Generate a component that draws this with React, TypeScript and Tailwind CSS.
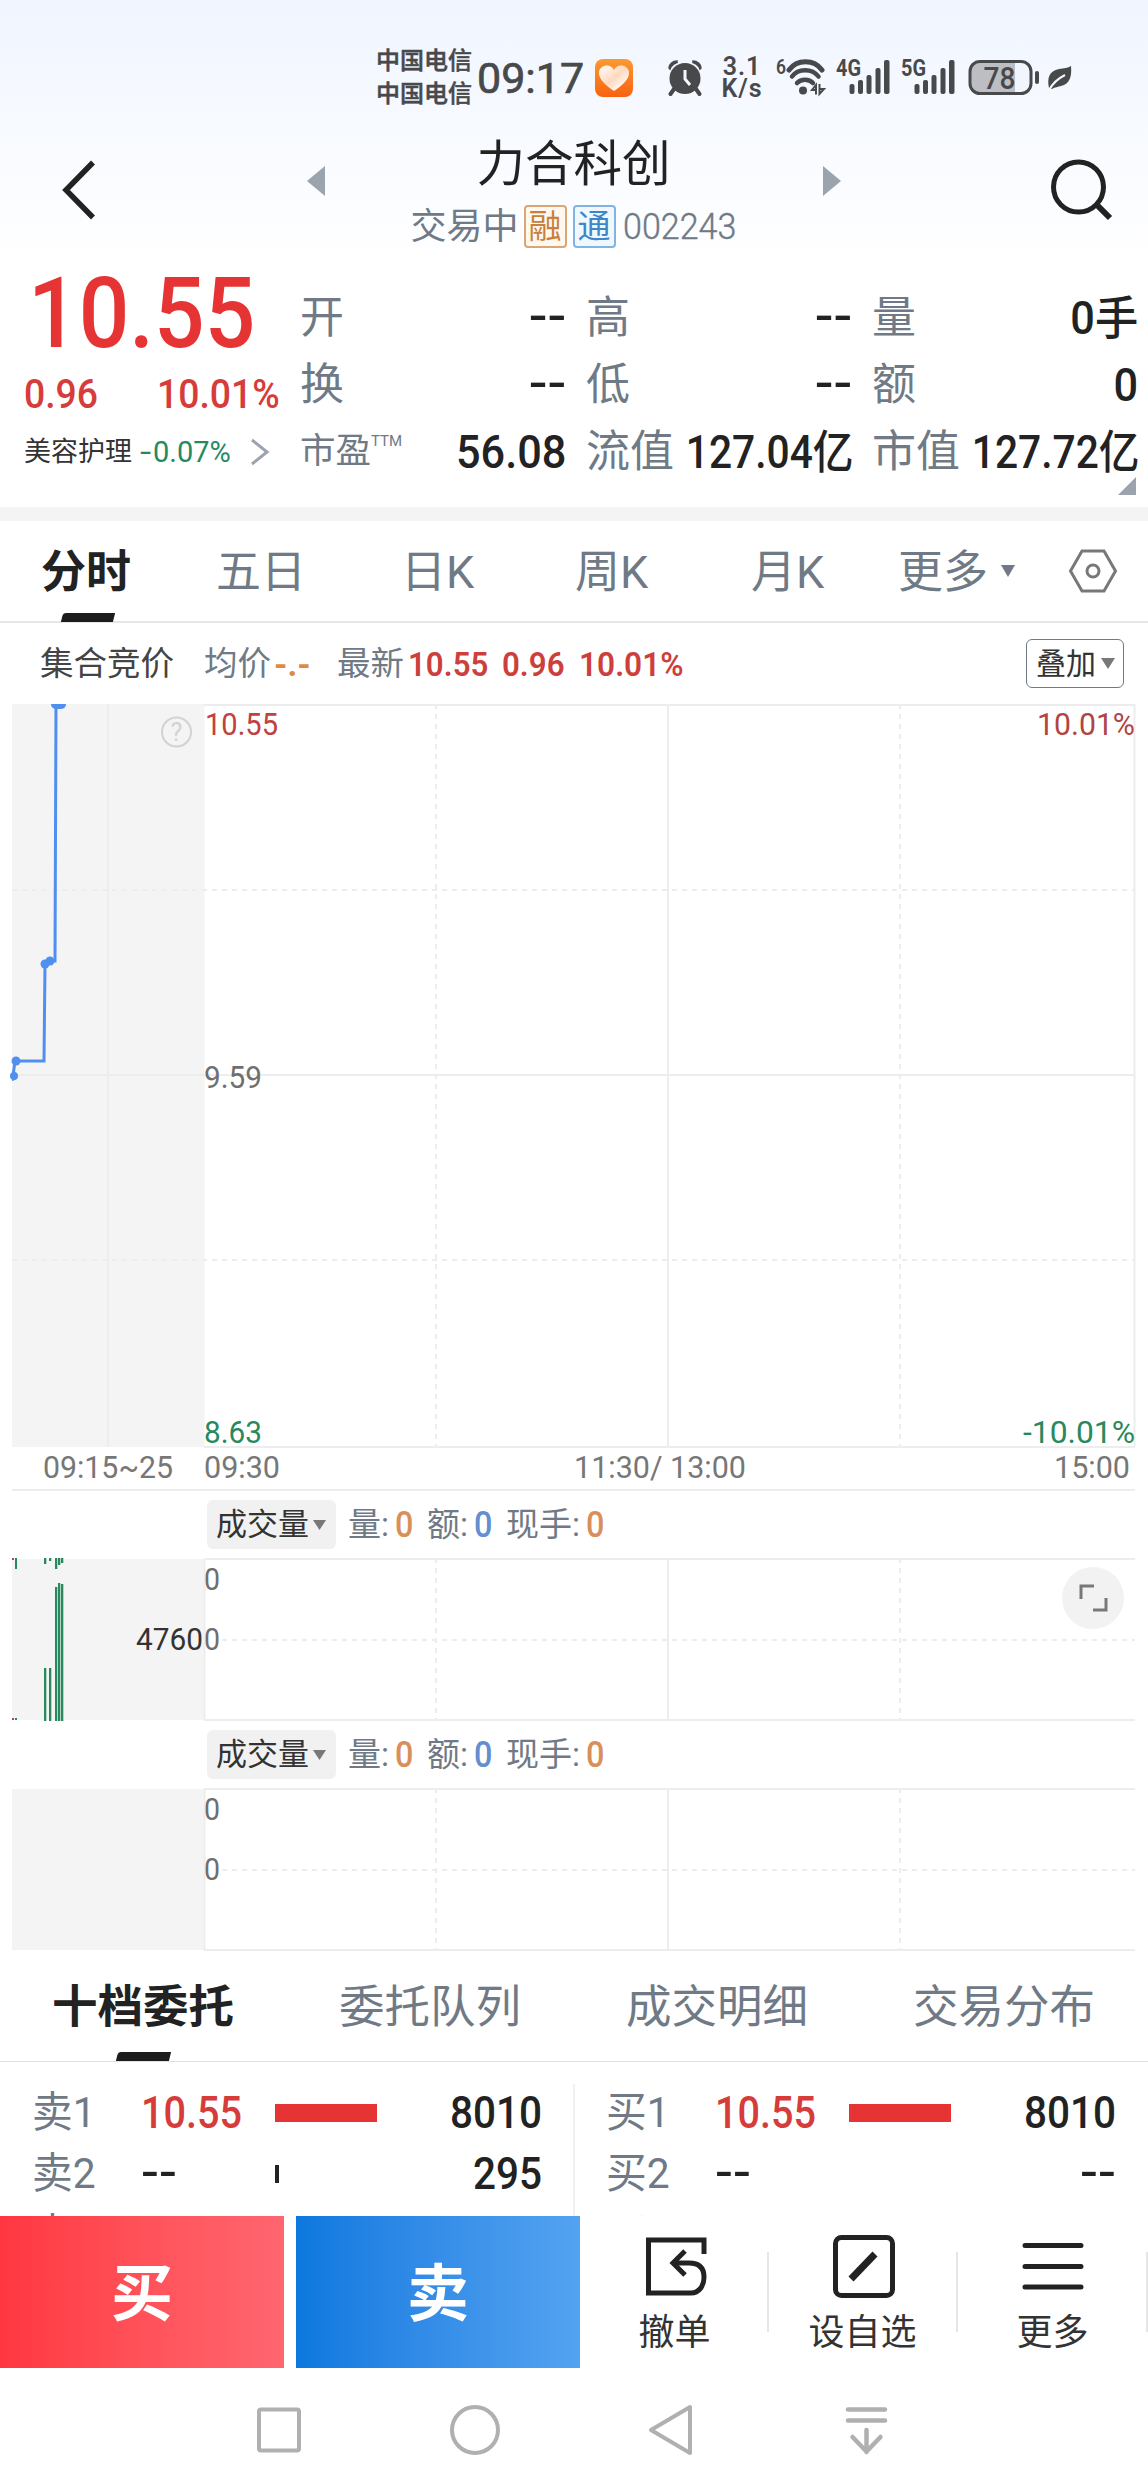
import React from "react";
import clsx from "clsx";

const kTabs = [
  { label: "五日", className: "w-[185px]" },
  { label: "日K", className: "w-[174px]" },
  { label: "周K", className: "w-[176px]" },
  { label: "月K", className: "w-[147px]" },
];

const bookTabs = ["十档委托", "委托队列", "成交明细", "交易分布"];

const sellOrders = [
  { label: "卖1", price: "10.55", volume: "8010", bar: 102, up: true },
  { label: "卖2", price: "--", volume: "295", bar: 4, up: false },
  { label: "卖3", price: "--", volume: "--", bar: 0, up: false },
];

const buyOrders = [
  { label: "买1", price: "10.55", volume: "8010", bar: 102, up: true },
  { label: "买2", price: "--", volume: "--", bar: 0, up: false },
  { label: "买3", price: "--", volume: "--", bar: 0, up: false },
];

const bars = [
  { x: 32, h: 6, y: 110 },
  { x: 37, h: 3, y: 110 },
  { x: 43, h: 11, y: 29 },
  { x: 46, h: 7, y: 25 },
  { x: 49, h: 5, y: 26 },
];

const Signal = ({ label }: { label: string }) => (
  <svg className="h-10 w-[54px] shrink-0 overflow-visible" viewBox="0 0 54 40" fill="#48494b">
    <text x="0" y="18.5" fontSize="23" fontWeight="700" textLength="25" lengthAdjust="spacingAndGlyphs">
      {label}
    </text>
    <rect x="13.5" y="27" width="5" height="10" rx="2" />
    <rect x="22" y="23" width="5" height="14" rx="2" />
    <rect x="30.5" y="18" width="5" height="19" rx="2" />
    <rect x="39.5" y="11" width="5" height="26" rx="2" />
    <rect x="48" y="3" width="5.5" height="34" rx="2" />
  </svg>
);

const StatusBar = () => (
  <div className="flex h-[130px] items-start pl-[376px] pt-[45px] text-[#48494b]">
    <div className="w-[101px] whitespace-nowrap text-[24px] font-medium leading-[33px] [-webkit-text-stroke:0.5px_#48494b]">
      <div>中国电信</div>
      <div>中国电信</div>
    </div>
    <div className="mt-[12px] w-[118px] text-[43px] leading-[43px] [-webkit-text-stroke:0.7px_#48494b]">09:17</div>
    <svg className="mt-[14px] h-[38px] w-[38px]" viewBox="0 0 38 38">
      <defs>
        <linearGradient id="heartBg" x1="0" y1="0" x2="0" y2="1">
          <stop offset="0" stopColor="#fb9a32" />
          <stop offset="1" stopColor="#f8620f" />
        </linearGradient>
        <linearGradient id="heartFg" x1="0" y1="0" x2="1" y2="1">
          <stop offset="0" stopColor="#ffffff" />
          <stop offset="0.5" stopColor="#ffd9be" />
          <stop offset="0.85" stopColor="#ffffff" />
        </linearGradient>
      </defs>
      <rect width="38" height="38" rx="8" fill="url(#heartBg)" />
      <path
        d="M19 32C10 26 4 20 4 14C4 9 8 6.500 12 6.500C15 6.500 17.500 8 19 11C20.500 8 23 6.500 26 6.500C30 6.500 34 9 34 14C34 20 28 26 19 32Z"
        fill="url(#heartFg)"
      />
    </svg>
    <svg className="ml-[34px] mt-[13px] h-[38px] w-[38px]" viewBox="0 0 38 38" fill="#48494b">
      <circle cx="18" cy="20.500" r="15.500" />
      <path d="M2 10C2 6 6 3 10 3L10 4.500C6 6 4 8 3 11ZM34 10C34 6 30 3 26 3L26 4.500C30 6 32 8 33 11Z" stroke="#48494b" strokeWidth="1.500" />
      <path d="M7 31L3.500 36M29 31L32.500 36" stroke="#48494b" strokeWidth="4" strokeLinecap="round" />
      <path d="M18 12V21L23 27" stroke="#f4f7fd" strokeWidth="3" fill="none" />
    </svg>
    <div className="ml-[12px] mt-[11px] w-[50px] text-center text-[25px] font-semibold leading-[22px]">
      <div className="tracking-[1px]">3.1</div>
      <div className="tracking-[1px]">K/s</div>
    </div>
    <svg className="ml-[8px] mt-[12px] h-10 w-[52px] overflow-visible" viewBox="0 0 52 40" fill="none" stroke="#48494b">
      <text x="1" y="17" fontSize="20" fontWeight="600" fill="#48494b" stroke="none" textLength="10" lengthAdjust="spacingAndGlyphs">
        6
      </text>
      <path d="M14 13C22 2 39 2 47 13" strokeWidth="5" strokeLinecap="round" />
      <path d="M17 19.500C23 11 37 11 43.500 19.500" strokeWidth="4.500" strokeLinecap="round" />
      <path d="M22 26C26 21.500 34 21.500 38 26" strokeWidth="4.500" strokeLinecap="round" />
      <circle cx="28" cy="33.500" r="4" fill="#48494b" stroke="none" />
      <path d="M41 37.500V28L37 33H41M44.500 27V37L49 32H44.500" strokeWidth="2" />
    </svg>
    <div className="ml-[9px] mt-[12px] flex w-[132px] gap-[11px]">
      <Signal label="4G" />
      <Signal label="5G" />
    </div>
    <svg className="mt-[13px] h-10 w-[106px]" viewBox="0 0 106 40">
      <rect x="2" y="3.500" width="61" height="32" rx="10" fill="#f1f5fd" />
      <path d="M12 3.500H47V35.500H12Q2 35.500 2 25.500V13.500Q2 3.500 12 3.500Z" fill="#bcbec3" />
      <rect x="2" y="3.500" width="61" height="32" rx="10" fill="none" stroke="#48494b" strokeWidth="3" />
      <rect x="67" y="13" width="4" height="13" rx="2" fill="#48494b" />
      <text x="15.500" y="30.500" fontSize="32" fontWeight="500" fill="#48494b" textLength="32" lengthAdjust="spacingAndGlyphs">
        78
      </text>
      <path d="M103 8C104 18 102 26 93 28C90 29 87 29 84 31L81 30C79 20 81 13 91 11C96 10 100 10 103 8Z" fill="#48494b" />
      <path d="M81 32C85 25 91 20 97 17" stroke="#f4f7fd" strokeWidth="2" fill="none" />
    </svg>
  </div>
);

const Header = () => (
  <div className="flex h-[132px] pt-[8px]">
    <svg className="ml-[60px] mt-[20px] h-[64px] w-[40px]" viewBox="0 0 40 64" fill="none" stroke="#222222" strokeWidth="5.500">
      <path d="M33 4.500L6 32L33 59.500" />
    </svg>
    <svg className="ml-[207px] mt-[28px] h-[30px] w-[18px]" viewBox="0 0 18 30" fill="#9ba3ad">
      <path d="M18 0V30L0 15Z" />
    </svg>
    <div className="flex w-[497px] flex-col items-center">
      <div className="pt-[1px] text-[48.500px] leading-[52px] text-[#222222]">力合科创</div>
      <div className="mt-[14px] flex h-[43px] items-center text-[#6f7a86]">
        <div className="w-[113px] pt-[1px] text-[36px] leading-[43px]">交易中</div>
        <div className="h-[43px] w-[43px] rounded-[4px] border-2 border-[#d9a774] bg-[#fff8ef] text-center text-[33px] leading-[39px] text-[#c9803a]">
          融
        </div>
        <div className="ml-[6px] h-[43px] w-[43px] rounded-[4px] border-2 border-[#82b4e2] bg-[#f0f8ff] text-center text-[33px] leading-[39px] text-[#3f86c8]">
          通
        </div>
        <div className="ml-[7px] w-[114px]">
          <span className="inline-block origin-left scale-x-[0.92] text-[37px] font-light leading-[43px] [-webkit-text-stroke:0.4px_#6f7a86]">
            002243
          </span>
        </div>
      </div>
    </div>
    <svg className="ml-[1px] mt-[28px] h-[30px] w-[18px]" viewBox="0 0 18 30" fill="#9ba3ad">
      <path d="M0 0V30L18 15Z" />
    </svg>
    <svg className="ml-[207px] mt-[20px] h-[64px] w-[66px]" viewBox="0 0 66 64" fill="none" stroke="#222222" strokeWidth="5">
      <circle cx="30.500" cy="29" r="25" />
      <path d="M49 47L62 60" strokeWidth="6" />
    </svg>
  </div>
);

type StatProps = { label: React.ReactNode; value: string; valueClass?: string };

const Stat = ({ label, value, valueClass = "scale-x-[0.94]" }: StatProps) => (
  <div className="flex items-center justify-between whitespace-nowrap">
    <span className="text-[44px] text-[#6f7a86]">{label}</span>
    <span className={clsx("inline-block origin-right text-[46px] font-medium text-[#222222]", valueClass)}>{value}</span>
  </div>
);

const dash = "-translate-y-[2px] scale-x-[1.2]";
const amount = "-ml-[20px] translate-x-[2px] scale-x-[0.885]";

const Quote = () => (
  <div className="relative flex h-[245px] leading-none">
    <div className="w-[300px] shrink-0 pt-[2px]">
      <div className="ml-[28px] origin-left scale-x-[0.9] text-[99px] font-medium text-[#e63333]">10.55</div>
      <div className="ml-[24px] mt-[6px] flex text-[41px] font-medium leading-[50px] text-[#d63c3a]">
        <span className="w-[133px] origin-left scale-x-[0.91]">0.96</span>
        <span className="origin-left scale-x-[0.91]">10.01%</span>
      </div>
      <div className="ml-[24px] mt-[13px] flex items-center leading-[40px]">
        <span className="w-[116px] text-[27px] text-[#333333]">美容护理</span>
        <span className="w-[110px] text-[29px] text-[#27895d]">
          <span className="inline-block origin-left scale-x-[1.4]">-</span>
          <span className="ml-[5px] inline-block">0.07%</span>
        </span>
        <svg className="h-[28px] w-[20px]" viewBox="0 0 20 28" fill="none" stroke="#9ba3ad" strokeWidth="3">
          <path d="M2 2L17 14L2 26" />
        </svg>
      </div>
    </div>
    <div className="grid h-[201px] grid-cols-[266px_266px_266px] grid-rows-[67px_67px_67px] gap-x-[20px] pt-[22px]">
      <Stat label="开" value="--" valueClass={dash} />
      <Stat label="高" value="--" valueClass={dash} />
      <Stat label="量" value="0手" />
      <Stat label="换" value="--" valueClass={dash} />
      <Stat label="低" value="--" valueClass={dash} />
      <Stat label="额" value="0" />
      <Stat
        label={
          <span className="flex text-[35.500px]">
            市盈<span className="text-[15px]">TTM</span>
          </span>
        }
        value="56.08"
      />
      <Stat label="流值" value="127.04亿" valueClass={amount} />
      <Stat label="市值" value="127.72亿" valueClass={amount} />
    </div>
    <svg className="absolute bottom-[12px] right-[12px] h-[18px] w-[18px]" viewBox="0 0 18 18" fill="#9ba3ad">
      <path d="M18 0V18H0Z" />
    </svg>
  </div>
);

const KTabs = () => (
  <div className="relative flex h-[102px] items-center border-b-2 border-[#e6e6e6] pl-[41px] pt-[3px] text-[45px] leading-none text-[#6f7a86]">
    <div className="w-[175px] font-bold text-[#222222]">分时</div>
    {kTabs.map((tab) => (
      <div key={tab.label} className={tab.className}>
        {tab.label}
      </div>
    ))}
    <div className="w-[103px]">更多</div>
    <svg className="mb-[3px] h-[12px] w-[14px]" viewBox="0 0 14 12" fill="#6f7a86">
      <path d="M0 0H14L7 12Z" />
    </svg>
    <svg className="mb-[3px] ml-[53px] h-[44px] w-[50px]" viewBox="0 0 50 44" fill="none" stroke="#7a7777" strokeWidth="3">
      <path d="M14 2H36L47.500 22L36 42H14L2.500 22Z" />
      <circle cx="25" cy="22" r="6" />
    </svg>
    <div className="absolute -bottom-[1px] left-[62px] h-[9px] w-[52px] -skew-x-[14deg] rounded-tl-[3px] bg-[#1c1c1c]"></div>
  </div>
);

const InfoRow = () => (
  <div className="flex h-[81px] items-center whitespace-nowrap pl-[40px] text-[33.500px] leading-none text-[#6f7a86]">
    <span className="w-[164px] text-[#444444]">集合竞价</span>
    <span className="w-[70px]">均价</span>
    <span className="w-[63px] text-[34px] font-bold text-[#e08a3e]">-.-</span>
    <span className="w-[71px]">最新</span>
    <span className="w-[94px] origin-left scale-x-[0.92] text-[34px] font-semibold text-[#cd3f3c]">10.55</span>
    <span className="w-[77px] origin-left scale-x-[0.92] text-[34px] font-semibold text-[#cd3f3c]">0.96</span>
    <span className="w-[447px] origin-left scale-x-[0.93] text-[34px] font-semibold text-[#cd3f3c]">10.01%</span>
    <div className="flex h-[49px] w-[98px] shrink-0 items-center rounded-[6px] border border-[#6f7a86] pl-[9px] text-[30px] text-[#333333]">
      叠加
      <svg className="ml-[5px] h-[11px] w-[14px]" viewBox="0 0 14 11" fill="#7a7777">
        <path d="M0 0H14L7 11Z" />
      </svg>
    </div>
  </div>
);

type LabelProps = { x: number; y: number; w: number; fill: string; children: string };

const Label = ({ x, y, w, fill, children }: LabelProps) => (
  <text x={x} y={y} fontSize="31" fill={fill} textLength={w} lengthAdjust="spacingAndGlyphs">
    {children}
  </text>
);

const PriceChart = () => (
  <svg className="ml-[12px] h-[786px] w-[1124px] overflow-visible" viewBox="0 0 1124 786">
    <rect y="0" width="192.500" height="743" fill="#f4f4f4" />
    <g stroke="#ededed" strokeWidth="2" fill="none">
      <path d="M96 0V743M656 0V743M1122.500 0V743" />
      <path d="M192 1H1123M0 371H1123M192 743H1123M0 786H1123" />
      <path d="M424 0V743M888 0V743M0 186H1123M0 556H1123" strokeDasharray="5 5" />
    </g>
    <g fill="#4f8fef">
      <path d="M1 372L3 357H32L33 260L38 257H43L44 0" fill="none" stroke="#4f8fef" strokeWidth="3" />
      <path d="M0 367a5 5 0 0 1 0 10Z" />
      <circle cx="2" cy="372" r="4" />
      <circle cx="4" cy="357" r="4.500" />
      <circle cx="33" cy="260" r="4.500" />
      <circle cx="38" cy="257" r="4.500" />
      <path d="M39 0H54Q54 5 48 5H45Q39 5 39 0Z" />
    </g>
    <circle cx="164.500" cy="28" r="14.500" fill="none" stroke="#d2d2d2" strokeWidth="2" />
    <text x="164.500" y="37" fontSize="25" fill="#d2d2d2" textAnchor="middle">
      ?
    </text>
    <Label x={193} y={31} w={73} fill="#c0413f">10.55</Label>
    <Label x={192} y={384} w={58} fill="#6f6f6f">9.59</Label>
    <Label x={192} y={739} w={58} fill="#27895d">8.63</Label>
    <Label x={1025} y={31} w={98} fill="#b04543">10.01%</Label>
    <Label x={1011} y={739} w={112} fill="#27895d">-10.01%</Label>
    <Label x={31} y={774} w={130} fill="#777777">09:15~25</Label>
    <Label x={192} y={774} w={76} fill="#777777">09:30</Label>
    <Label x={562} y={774} w={172} fill="#777777">11:30/ 13:00</Label>
    <Label x={1042} y={774} w={76} fill="#777777">15:00</Label>
  </svg>
);

const VolumePanel = ({ withBars }: { withBars?: boolean }) => (
  <div>
    <div className="flex h-[68px] items-center whitespace-nowrap pl-[207px] pt-[1px] text-[33px] leading-none text-[#6f7a86]">
      <div className="mr-[12px] flex h-[49px] w-[129px] items-center rounded-[6px] bg-[#f1f1f1] pl-[9px] text-[31px] text-[#333333]">
        成交量
        <svg className="ml-[4px] h-[10px] w-[13px]" viewBox="0 0 13 10" fill="#7a7777">
          <path d="M0 0H13L6.500 10Z" />
        </svg>
      </div>
      <span className="w-[47px]">量:</span>
      <span className="w-[32px] origin-left scale-x-[0.9] text-[36px] font-medium text-[#d98f59]">0</span>
      <span className="w-[47px]">额:</span>
      <span className="w-[32px] origin-left scale-x-[0.9] text-[36px] font-medium text-[#638ecf]">0</span>
      <span className="w-[80px]">现手:</span>
      <span className="origin-left scale-x-[0.9] text-[36px] font-medium text-[#d98f59]">0</span>
    </div>
    <div className="relative h-[162px]">
      <svg className="ml-[12px] h-[162px] w-[1124px] overflow-visible" viewBox="0 0 1124 162">
        <rect y="1" width="192" height="161" fill="#f4f4f4" />
        <g stroke="#ededed" strokeWidth="2" fill="none">
          <path d="M192.500 0V162M656 0V162M192 1H1123M192 162H1123" />
          <path d="M424 0V162M888 0V162M210 82H1123" strokeDasharray="5 5" />
        </g>
        {withBars && (
          <g fill="#27895d">
            {bars.map((bar) => (
              <g key={bar.x}>
                <rect x={bar.x} y="0" width="2.3" height={bar.h} />
                <rect x={bar.x} y={bar.y} width="2.3" height={163 - bar.y} />
              </g>
            ))}
            <rect x="3" y="0" width="2" height="11" />
            <rect x="3" y="160" width="2" height="2" />
            <rect x="0" y="0" width="2" height="2" fill="#c0413f" />
            <rect x="0" y="160" width="2" height="2" fill="#c0413f" />
            <Label x={124} y={92} w={67} fill="#333333">4760</Label>
          </g>
        )}
        <Label x={192} y={32} w={16} fill="#6f6f6f">0</Label>
        <Label x={192} y={92} w={16} fill="#6f6f6f">0</Label>
      </svg>
      {withBars && (
        <div className="absolute right-[24px] top-[9px] grid h-[62px] w-[62px] place-items-center rounded-full bg-[#f2f2f2]">
          <svg className="h-[30px] w-[30px]" viewBox="0 0 30 30" fill="none" stroke="#7a7777" strokeWidth="3">
            <path d="M3 16V3H16M28 15V27H15" />
          </svg>
        </div>
      )}
    </div>
  </div>
);

const BookTabs = () => (
  <div className="relative flex h-[112px] items-center border-b border-[#e0e0e0] pl-[52px] pt-[5px] text-[45.500px] leading-none text-[#6f7a86]">
    {bookTabs.map((tab, i) => (
      <div key={tab} className={clsx("w-[287px] shrink-0", i === 0 && "font-bold text-[#222222]")}>
        {tab}
      </div>
    ))}
    <div className="absolute bottom-0 left-[117px] h-[9px] w-[53px] -skew-x-[14deg] rounded-tl-[3px] bg-[#1c1c1c]"></div>
  </div>
);

const OrderColumn = ({ orders }: { orders: typeof sellOrders }) => (
  <div className="w-1/2 pl-[32px] pr-[32px]">
    {orders.map((order) => (
      <div key={order.label} className="flex h-[61px] items-center whitespace-nowrap text-[44px] font-medium leading-none text-[#222222]">
        <span className="w-[109px] origin-left scale-x-[0.97] text-[42px] font-normal text-[#6f7a86]">{order.label}</span>
        <span
          className={clsx(
            "w-[134px] origin-left",
            order.up ? "scale-x-[0.9] text-[#d63c3a]" : "-translate-y-[2px] scale-x-[1.2]"
          )}
        >
          {order.price}
        </span>
        <div
          className={clsx("h-[18px]", order.up ? "bg-[#e63333]" : "bg-[#222222]")}
          style={{ width: order.bar }}
        ></div>
        <span
          className={clsx(
            "ml-auto origin-right",
            order.volume === "--" ? "-translate-y-[2px] scale-x-[1.2]" : "scale-x-[0.92]"
          )}
        >
          {order.volume}
        </span>
      </div>
    ))}
  </div>
);

const BottomBar = () => (
  <div className="flex h-[152px] bg-white text-[36px] leading-none text-[#333333]">
    <button className="mr-[12px] w-[284px] bg-gradient-to-r from-[#ff3640] to-[#ff6670] pt-[6px] text-[62px] font-bold text-white">
      买
    </button>
    <button className="w-[284px] bg-gradient-to-r from-[#0a78de] to-[#53a3f1] pt-[6px] text-[62px] font-bold text-white">卖</button>
    <div className="flex w-[187px] flex-col items-center pt-[18px]">
      <svg className="ml-[4px] h-[66px] w-[66px]" viewBox="0 0 66 66" fill="none" stroke="#222222" strokeWidth="5">
        <path d="M61 20V6H5.500V59H48C56 59 61 52 61 43C61 34 56 29 46 29H31" />
        <path d="M42 17L30 29L42 41" />
      </svg>
      <span className="ml-[2px] mt-[15px]">撤单</span>
    </div>
    <div className="mt-[36px] h-[80px] w-[2px] bg-[#e6e6e6]"></div>
    <div className="flex w-[187px] flex-col items-center pt-[18px]">
      <svg className="ml-[2px] h-[66px] w-[66px]" viewBox="0 0 66 66" fill="none" stroke="#222222" strokeWidth="5">
        <rect x="4.500" y="3.500" width="57" height="58" rx="6" />
        <path d="M20 45L44 20" strokeWidth="7" />
      </svg>
      <span className="mt-[15px]">设自选</span>
    </div>
    <div className="mt-[36px] h-[80px] w-[2px] bg-[#e6e6e6]"></div>
    <div className="flex w-[189px] flex-col items-center pt-[18px]">
      <svg className="h-[66px] w-[66px]" viewBox="0 0 66 66" fill="none" stroke="#222222" strokeWidth="5" strokeLinecap="round">
        <path d="M5 11.500H61M5 32.500H61M5 53H61" />
      </svg>
      <span className="mt-[15px]">更多</span>
    </div>
    <div className="-ml-[1px] mt-[36px] h-[80px] w-[2px] bg-[#e6e6e6]"></div>
  </div>
);

const NavBar = () => (
  <div className="flex h-[124px] items-center pl-[254px]">
    <svg className="h-[52px] w-[52px]" viewBox="0 0 52 52" fill="none" stroke="#b0b0b0" strokeWidth="4">
      <rect x="5" y="5.500" width="40" height="41" rx="2" />
    </svg>
    <svg className="ml-[143px] h-[52px] w-[52px]" viewBox="0 0 52 52" fill="none" stroke="#b0b0b0" strokeWidth="4">
      <circle cx="26" cy="26" r="23" />
    </svg>
    <svg className="ml-[144px] h-[52px] w-[52px]" viewBox="0 0 52 52" fill="none" stroke="#b0b0b0" strokeWidth="4" strokeLinejoin="round">
      <path d="M45 3V49L6 26Z" />
    </svg>
    <svg className="ml-[144px] h-[52px] w-[52px]" viewBox="0 0 52 52" fill="none" stroke="#b0b0b0" strokeWidth="4.500" strokeLinecap="round">
      <path d="M7 5.500H44M7 16.500H44M25.500 26V48M11.500 33L25.500 47.500L39.500 33" />
    </svg>
  </div>
);

export default function App() {
  return (
    <div className="flex h-[2492px] w-[1148px] flex-col overflow-hidden bg-white font-['Roboto','Noto_Sans_CJK_SC',sans-serif]">
      <div className="bg-gradient-to-b from-[#f0f5ff] to-white">
        <StatusBar />
        <Header />
      </div>
      <Quote />
      <div className="h-[14px] bg-[#f4f4f4]"></div>
      <KTabs />
      <InfoRow />
      <PriceChart />
      <VolumePanel withBars />
      <VolumePanel />
      <BookTabs />
      <div className="relative flex h-[154px] overflow-hidden pt-[20px]">
        <OrderColumn orders={sellOrders} />
        <OrderColumn orders={buyOrders} />
        <div className="absolute left-[573px] top-[22px] h-[132px] w-[2px] bg-[#f1f1f1]"></div>
      </div>
      <BottomBar />
      <NavBar />
    </div>
  );
}
